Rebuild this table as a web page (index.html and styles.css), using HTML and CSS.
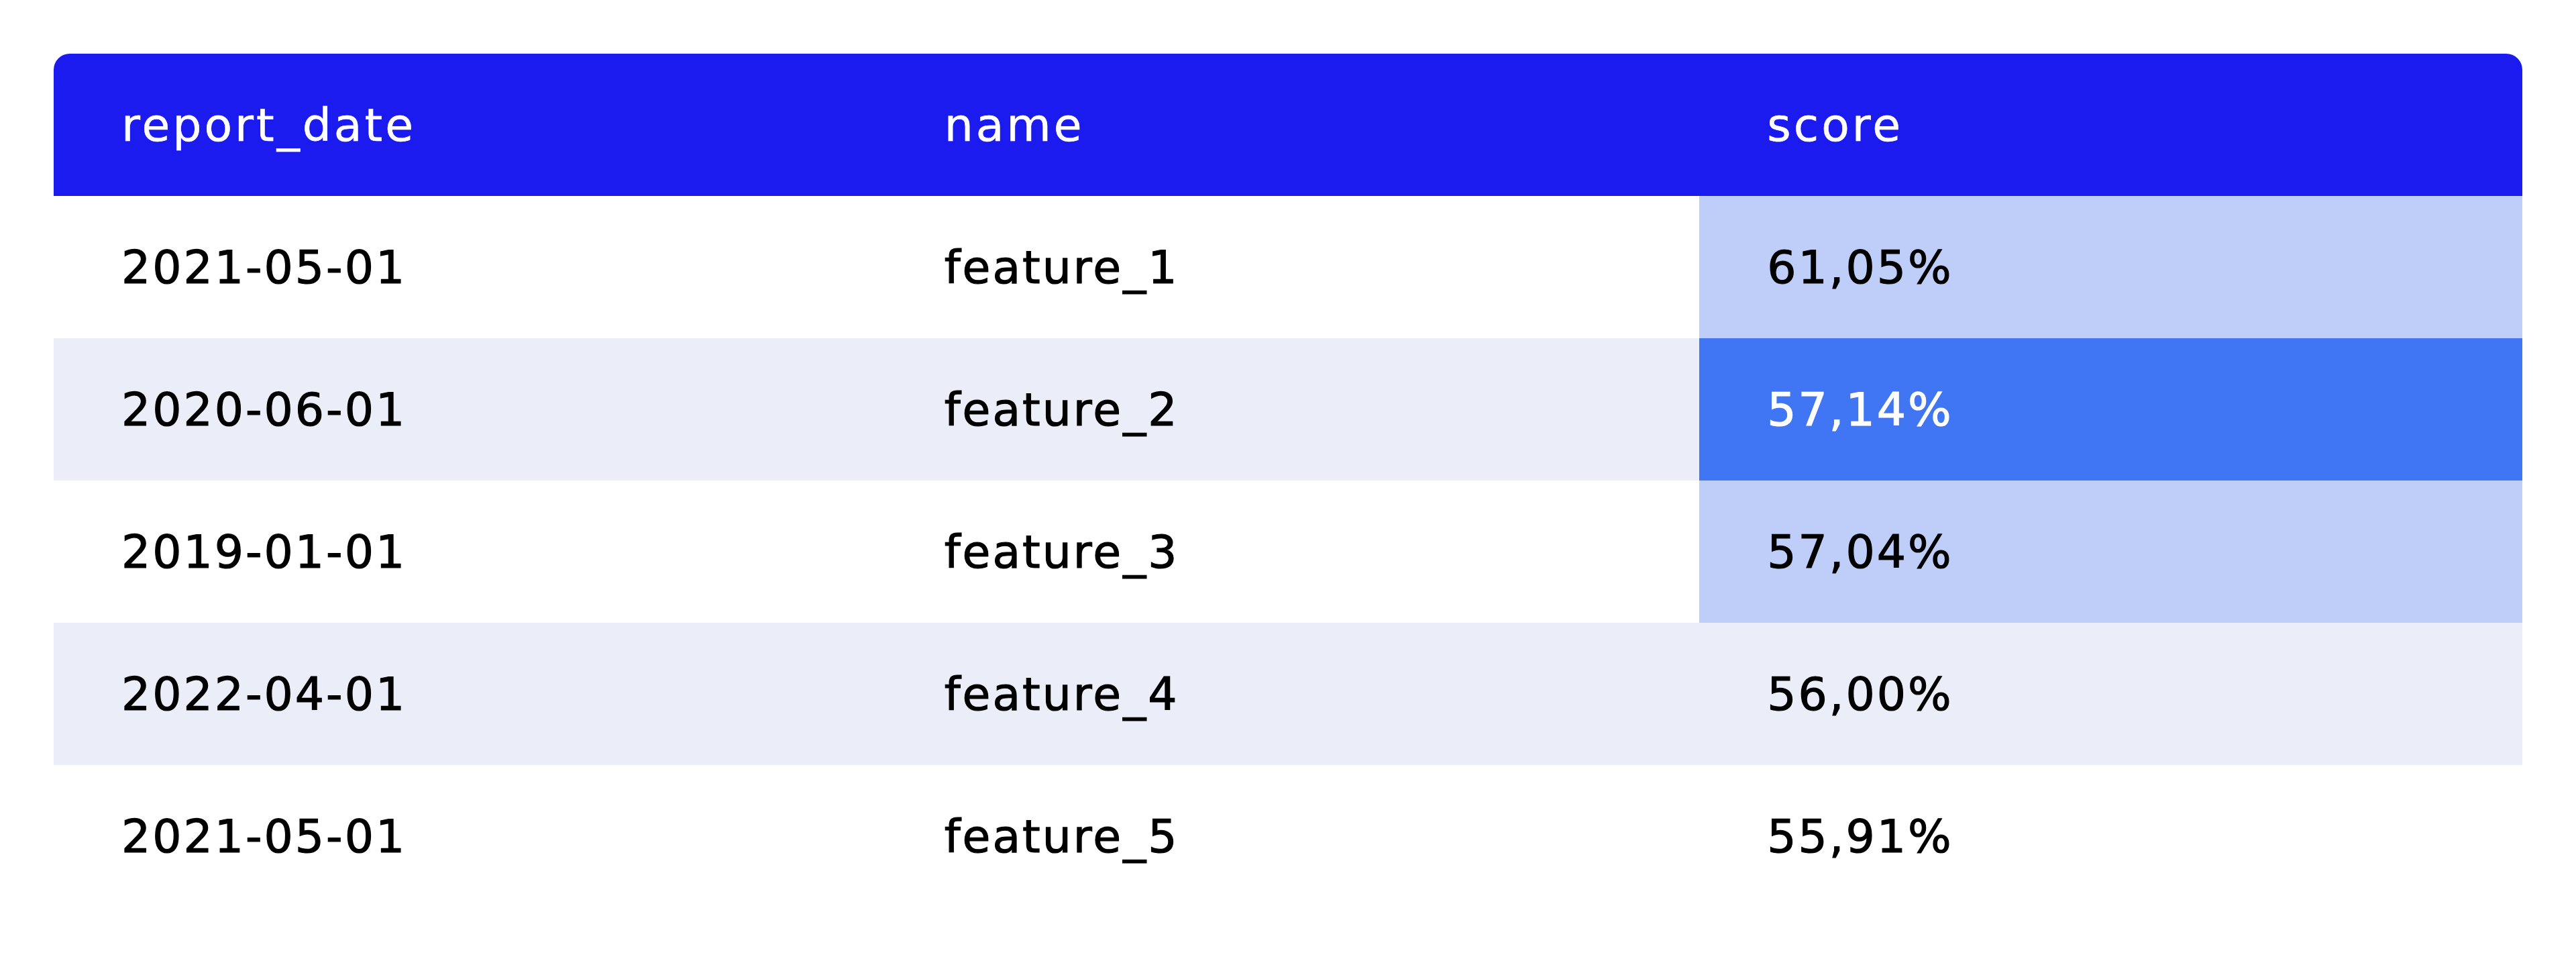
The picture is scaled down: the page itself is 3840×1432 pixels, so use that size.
FILE: index.html
```html
<!DOCTYPE html>
<html lang="en">
<head>
<meta charset="utf-8">
<title>Table</title>
<link rel="stylesheet" href="styles.css">
</head>
<body>
<div class="table">
  <div class="row head">
    <div class="cell">report_date</div>
    <div class="cell">name</div>
    <div class="cell">score</div>
  </div>
  <div class="row">
    <div class="cell">2021-05-01</div>
    <div class="cell">feature_1</div>
    <div class="cell light">61,05%</div>
  </div>
  <div class="row alt">
    <div class="cell">2020-06-01</div>
    <div class="cell">feature_2</div>
    <div class="cell strong">57,14%</div>
  </div>
  <div class="row">
    <div class="cell">2019-01-01</div>
    <div class="cell">feature_3</div>
    <div class="cell light">57,04%</div>
  </div>
  <div class="row alt">
    <div class="cell">2022-04-01</div>
    <div class="cell">feature_4</div>
    <div class="cell">56,00%</div>
  </div>
  <div class="row">
    <div class="cell">2021-05-01</div>
    <div class="cell">feature_5</div>
    <div class="cell">55,91%</div>
  </div>
</div>
</body>
</html>
```
FILE: styles.css
```css
html, body {
  margin: 0;
  padding: 0;
  background: #ffffff;
}
body {
  padding: 80px;
  font-family: "DejaVu Sans", "Liberation Sans", sans-serif;
  color: #000000;
}
.table {
  width: 3680px;
  display: flex;
  flex-direction: column;
}
.row {
  display: grid;
  grid-template-columns: 1fr 1fr 1fr;
  height: 212px;
  background: #ffffff;
}
.row.alt {
  background: #ebeef8;
}
.row.head {
  background: #1b1aef;
  color: #ffffff;
  border-radius: 24px 24px 0 0;
}
.cell {
  display: flex;
  align-items: center;
  padding-left: 101px;
  font-size: 68px;
  letter-spacing: 3px;
  white-space: nowrap;
  -webkit-text-stroke: 1.2px currentColor;
}
.row.head .cell {
  letter-spacing: 4px;
  -webkit-text-stroke: 0.6px currentColor;
}
.cell.light {
  background: #bfcef8;
}
.cell.strong {
  background: #4075f3;
  color: #ffffff;
}
```
